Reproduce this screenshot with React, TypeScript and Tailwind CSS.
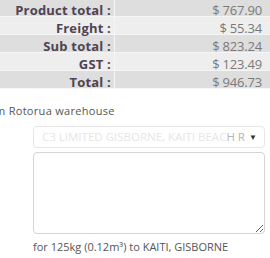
import React from 'react';

const rows = [
  { label: 'Product total :', value: '$ 767.90' },
  { label: 'Freight :', value: '$ 55.34' },
  { label: 'Sub total :', value: '$ 823.24' },
  { label: 'GST :', value: '$ 123.49' },
  { label: 'Total :', value: '$ 946.73' },
];

export default function App() {
  return (
    <div className="w-[270px] h-[258px] overflow-hidden bg-white font-['Open_Sans',sans-serif]">
      <div className="-mt-[1px] w-[270px]">
        {rows.map((r, i) => (
          <div
            key={r.label}
            className={`flex h-[18px] border-b border-[#f5f5f5] ${i % 2 === 0 ? 'bg-[#dedede]' : 'bg-[#eeeeee]'}`}
          >
            <div className="w-[115px] shrink-0 border-r border-[#f5f5f5] pt-[2px] pr-[3px] text-right text-[13px] leading-[18px] font-bold tracking-[0.2px] text-[#4f4450]">
              {r.label}
            </div>
            <div className="flex-1 pt-[2px] pr-[8px] text-right text-[13px] leading-[18px] tracking-[-0.2px] text-[#7a7a7a]">
              {r.value}
            </div>
          </div>
        ))}
      </div>

      <div className="mt-[15px] ml-[-5px] text-[11px] leading-[14px] tracking-[0.3px] text-[#555555] whitespace-nowrap">
        m Rotorua warehouse
      </div>

      <div className="ml-[33px] mr-[5px] mt-[8px] flex h-[22px] items-center rounded-[4px] border border-[#e6e6e6] bg-white pl-[8px] pr-[7px]">
        <span className="min-w-0 flex-1 overflow-hidden whitespace-nowrap text-[11.5px] text-[#e6e6e6]">
          C3 LIMITED GISBORNE, KAITI BEAC<span className="text-[#b5b5b5]">H R</span>
        </span>
        <span className="ml-[4px] shrink-0 text-[8px] text-[#333333]">▼</span>
      </div>

      <div className="ml-[33px] mr-[5px] mt-[4px]">
        <textarea className="block h-[82px] w-full resize-y rounded-[4px] border border-[#d4d4d4] bg-white outline-none" />
      </div>

      <div className="ml-[33px] mt-[6px] text-[11px] leading-[14px] text-[#555555] whitespace-nowrap">
        for 125kg (0.12m³) to KAITI, GISBORNE
      </div>
    </div>
  );
}
